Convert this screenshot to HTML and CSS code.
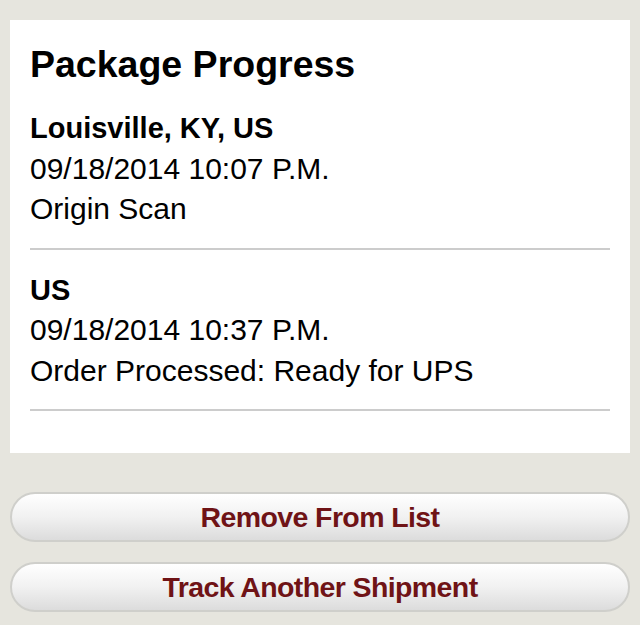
FILE: index.html
```html
<!DOCTYPE html>
<html lang="en">
<head>
    <meta charset="UTF-8">
    <meta name="viewport" content="width=device-width, initial-scale=1.0">
    <title>Package Progress</title>
    <link rel="stylesheet" href="styles.css">
</head>
<body>
    <div class="page">
        <div class="card">
            <h1>Package Progress</h1>
            <div class="activity">
                <div class="place">Louisville, KY, US</div>
                <div>09/18/2014 10:07 P.M.</div>
                <div>Origin Scan</div>
            </div>
            <div class="activity">
                <div class="place">US</div>
                <div>09/18/2014 10:37 P.M.</div>
                <div>Order Processed: Ready for UPS</div>
            </div>
        </div>
        <div class="actions">
            <button type="button">Remove From List</button>
            <button type="button">Track Another Shipment</button>
        </div>
    </div>
</body>
</html>
```

FILE: styles.css
```css
body{
    margin:0;
    background:#e6e5de;
    font-family:"Liberation Sans", Arial, sans-serif;
    color:#000;
}

.page{
    padding:20px 10px 0;
}

.card{
    background:#fff;
    padding:20px 20px 40px;
}

h1{
    margin:0 0 12px;
    font-size:37.5px;
    line-height:48px;
    font-weight:bold;
}

.activity{
    font-size:30px;
    line-height:40.5px;
    padding:8px 0 18px;
    border-bottom:2px solid #cccccc;
    margin-bottom:2px;
}

.activity + .activity{
    padding-top:18px;
}

.activity .place{
    font-weight:bold;
    font-size:29px;
}

.actions{
    display:flex;
    flex-direction:column;
    gap:20px;
    padding-top:39px;
}

.actions button{
    height:50px;
    border:2px solid #cfcfcb;
    border-radius:25px;
    background:linear-gradient(180deg, #ffffff 0%, #f1f1f1 50%, #dcdcdc 100%);
    color:#6f1316;
    font-family:"Liberation Sans", Arial, sans-serif;
    font-size:28.5px;
    font-weight:bold;
    letter-spacing:-0.6px;
    cursor:pointer;
}
```
